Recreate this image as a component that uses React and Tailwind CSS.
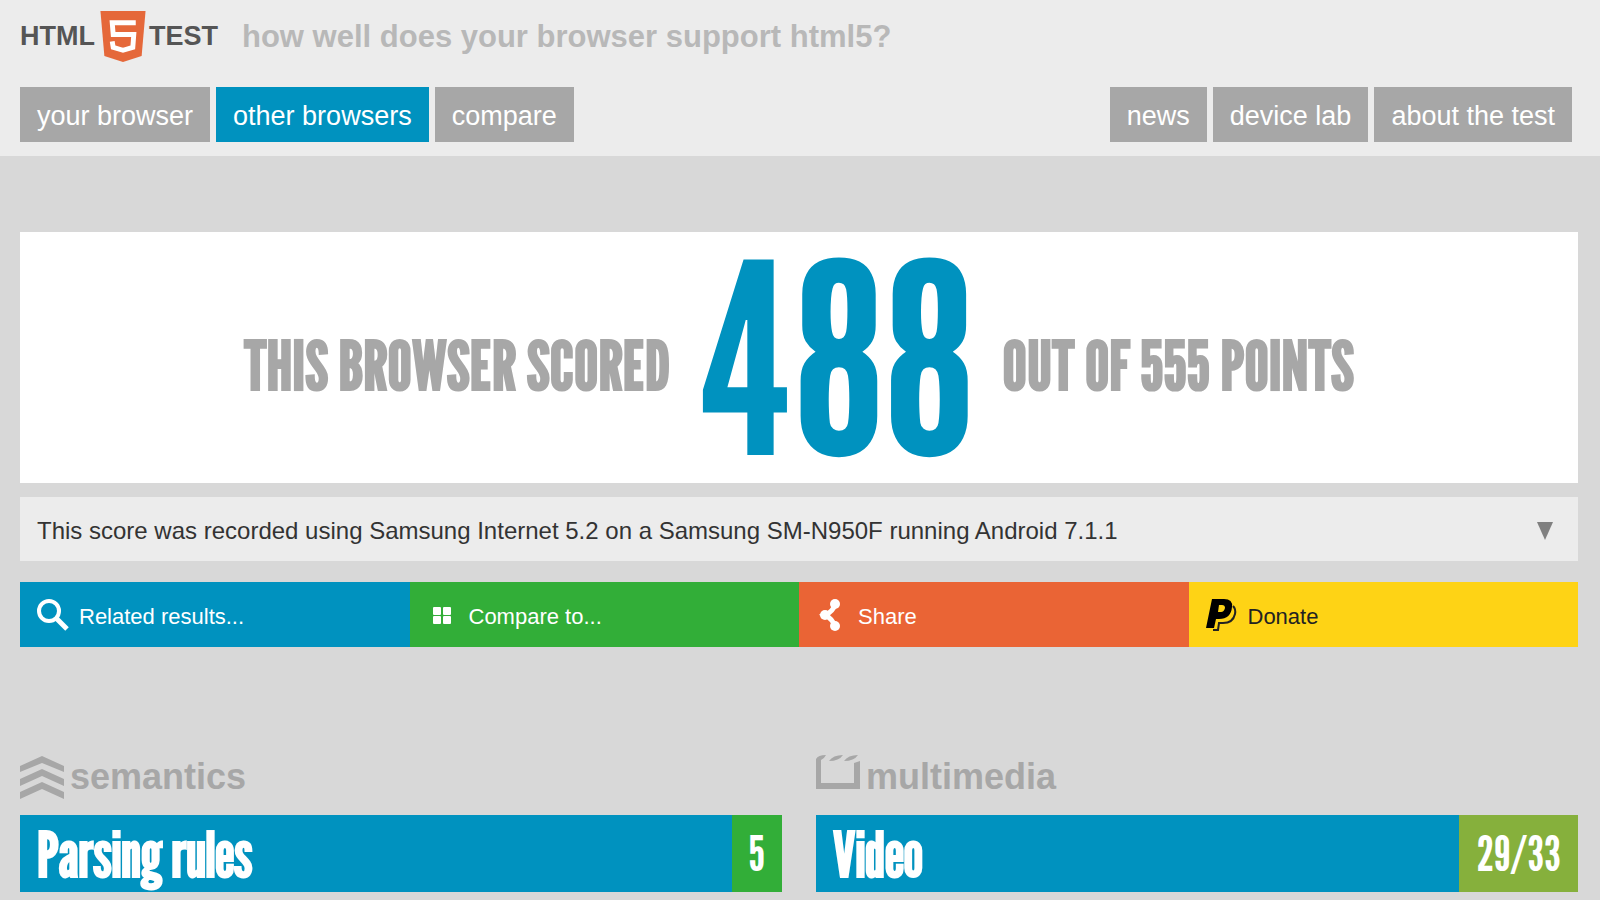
import React from 'react';

const leftLinks = [
  { label: 'your browser', active: false },
  { label: 'other browsers', active: true },
  { label: 'compare', active: false },
];

const rightLinks = [
  { label: 'news', active: false },
  { label: 'device lab', active: false },
  { label: 'about the test', active: false },
];

const actions = [
  { label: 'Related results...', icon: SearchIcon, color: 'bg-[#0092bf] text-white' },
  { label: 'Compare to...', icon: GridIcon, color: 'bg-[#32ae38] text-white' },
  { label: 'Share', icon: ShareIcon, color: 'bg-[#ea6435] text-white' },
  { label: 'Donate', icon: PaypalIcon, color: 'bg-[#fed315] text-[#222222]' },
];

const categories = [
  {
    name: 'semantics',
    icon: SemanticsIcon,
    test: 'Parsing rules',
    score: '5',
    scoreColor: 'bg-[#32ae38]',
  },
  {
    name: 'multimedia',
    icon: MultimediaIcon,
    test: 'Video',
    score: '29/33',
    scoreColor: 'bg-[#86b03c]',
  },
];

function SearchIcon() {
  return (
    <svg viewBox="0 0 32 32" className="size-8" fill="none" stroke="currentColor" aria-hidden="true">
      <circle cx="12" cy="12" r="10" strokeWidth="4" />
      <path d="M19 19 30 30" strokeWidth="5" />
    </svg>
  );
}

function GridIcon() {
  return (
    <svg viewBox="0 0 32 32" className="size-8" fill="currentColor" aria-hidden="true">
      <rect x="6" y="8" width="8" height="8" rx="1" />
      <rect x="16" y="8" width="8" height="8" rx="1" />
      <rect x="6" y="17" width="8" height="8" rx="1" />
      <rect x="16" y="17" width="8" height="8" rx="1" />
    </svg>
  );
}

function ShareIcon() {
  return (
    <svg viewBox="0 0 32 32" className="size-8" fill="currentColor" aria-hidden="true">
      <path d="M19 5Q17 13 9 16q8 4 10 12" fill="none" stroke="currentColor" strokeWidth="5" />
      <circle cx="19" cy="5" r="5" />
      <circle cx="9" cy="16" r="5" />
      <circle cx="19" cy="27" r="5" />
    </svg>
  );
}

function PaypalIcon() {
  return (
    <svg viewBox="0 0 32 32" className="size-8" aria-hidden="true">
      <path
        fill="none"
        stroke="#222222"
        strokeWidth="2"
        d="M27 7q3 3 2 8-2 9-12 9h-4l-1 7H7"
      />
      <path fill="#000000" d="M6 0h12q9 0 8 8-1 12-13 12h-3l-2 9H0z" />
      <path fill="#fed315" d="M13 6h3q3 0 3 3-1 4-4 4h-3z" />
    </svg>
  );
}

function SemanticsIcon() {
  return (
    <svg viewBox="0 0 44 44" className="size-11" fill="currentColor" aria-hidden="true">
      <path d="M0 11 22 1l22 10v6L22 8 0 17z" />
      <path d="M0 24 22 14l22 10v7L22 21 0 31z" />
      <path d="M0 37 22 27l22 10v7L22 34 0 44z" />
    </svg>
  );
}

function MultimediaIcon() {
  return (
    <svg viewBox="0 0 44 44" className="size-11" fill="currentColor" aria-hidden="true">
      <path d="M0 4q2-4 10-4-2 4-5 5v23h33V8l6-2v28H0z" />
      <path d="M13 6q4-6 14-6-4 6-14 6zM28 6q4-6 14-6-4 6-14 6z" />
    </svg>
  );
}

function Logo() {
  return (
    <a href="#" className="flex items-center text-[27px] leading-none font-bold text-[#555555]">
      HTML
      <svg viewBox="0 0 46 52" className="mr-[3px] ml-[5px] h-[51px] w-[46px]" aria-hidden="true">
        <path fill="#e5683a" d="M0 0h46l-4 46-19 6-19-6z" />
        <path
          fill="none"
          stroke="#ffffff"
          strokeWidth="5"
          d="M36 12H12l1 12h21l-1 13-10 3-10-3-1-6"
        />
      </svg>
      TEST
    </a>
  );
}

function NavLinks({ links }) {
  return (
    <ul className="flex gap-[6px]">
      {links.map((link) => (
        <li key={link.label}>
          <a
            href="#"
            className={`flex h-[55px] items-center px-[17px] pt-1 text-[27px] text-white ${
              link.active ? 'bg-[#0092bf]' : 'bg-[#a7a7a7]'
            }`}
          >
            {link.label}
          </a>
        </li>
      ))}
    </ul>
  );
}

function Category({ category }) {
  const Icon = category.icon;

  return (
    <section>
      <h2 className="flex h-11 items-center gap-[6px] text-[36px] font-bold text-[#a7a7a7]">
        <Icon />
        {category.name}
      </h2>
      <div className="mt-4 flex h-[77px] bg-[#0092bf] font-['League_Gothic','Roboto_Condensed',sans-serif] leading-none text-white">
        <h3 className="flex flex-1 items-center px-[17px] text-[62px] font-bold">{category.test}</h3>
        <div className={`flex items-center px-[17px] text-[48px] ${category.scoreColor}`}>
          {category.score}
        </div>
      </div>
    </section>
  );
}

function App() {
  return (
    <div className="min-h-screen bg-[#d8d8d8] font-['Liberation_Sans',Arial,sans-serif] text-[#333333]">
      <header className="bg-[#ececec] px-5 pt-[11px] pb-[14px]">
        <div className="flex items-center gap-6">
          <Logo />
          <p className="text-[31px] leading-none font-bold text-[#b8b8b8]">
            how well does your browser support html5?
          </p>
        </div>
        <nav className="mt-[25px] flex justify-between pr-2">
          <NavLinks links={leftLinks} />
          <NavLinks links={rightLinks} />
        </nav>
      </header>

      <main className="pt-[76px] pr-[22px] pl-5">
        <h1 className="flex h-[251px] items-center justify-center gap-7 bg-white font-['League_Gothic','Roboto_Condensed',sans-serif] text-[68px] leading-none font-bold text-[#a7a7a7]">
          <span className="pt-[14px]">THIS BROWSER SCORED</span>
          <strong className="text-[266px] font-normal text-[#0092bf]">488</strong>
          <span className="pt-[14px]">OUT OF 555 POINTS</span>
        </h1>

        <button
          type="button"
          className="mt-[14px] flex h-16 w-full items-center justify-between bg-[#ececec] px-[17px] pt-1 text-left text-[24px]"
        >
          This score was recorded using Samsung Internet 5.2 on a Samsung SM-N950F running Android 7.1.1
          <svg viewBox="0 0 16 18" className="mr-2 h-[18px] w-4" aria-hidden="true">
            <path fill="#808080" d="M0 0h16L8 18z" />
          </svg>
        </button>

        <div className="mt-[21px] grid grid-cols-4">
          {actions.map(({ label, icon: Icon, color }) => (
            <button
              key={label}
              type="button"
              className={`flex h-[65px] items-center gap-[10px] px-[17px] text-[22px] ${color}`}
            >
              <Icon />
              <span className="pt-1">{label}</span>
            </button>
          ))}
        </div>

        <div className="mt-27 grid grid-cols-2 gap-[34px]">
          {categories.map((category) => (
            <Category key={category.name} category={category} />
          ))}
        </div>
      </main>
    </div>
  );
}

export default App;
